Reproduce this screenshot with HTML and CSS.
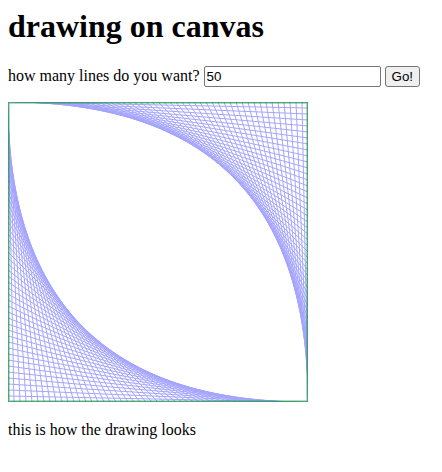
FILE: index.html
```html
<!DOCTYPE html>
<html>
<head>
<meta charset="utf-8">
<link rel="stylesheet" href="styles.css">
</head>
<body>
<h1 class="title">drawing on canvas</h1>
<p class="controls">how many lines do you want? <input class="count" type="text" value="50"> <button class="go">Go!</button></p>
<canvas id="board" class="board" width="300" height="300"></canvas>
<p class="caption">this is how the drawing looks</p>
<script src="script.js"></script>
</body>
</html>
```

FILE: styles.css
```css
body {
  margin: 8px;
  font-family: "Liberation Serif", "Times New Roman", serif;
  font-size: 16px;
  color: #000;
  background: #fff;
}
.title {
  font-size: 32px;
  font-weight: bold;
  margin: 0 0 21px 0;
}
.controls {
  margin: 0 0 15px 0;
}
.count {
  font-family: "Liberation Sans", Arial, sans-serif;
  font-size: 13.33px;
  width: 177px;
  height: 21px;
  box-sizing: border-box;
  padding: 1px 2px;
  border: 1px solid #767676;
  border-radius: 2px;
}
.go {
  font-family: "Liberation Sans", Arial, sans-serif;
  font-size: 13.33px;
  height: 21px;
  box-sizing: border-box;
  padding: 1px 6px;
  border: 1px solid #767676;
  border-radius: 3px;
  background: #efefef;
}
.board {
  vertical-align: baseline;
}
.caption {
  margin: 15px 0;
}
```

FILE: script.js
```js
const canvas = document.getElementById('board');
const ctx = canvas.getContext('2d');
const n = 50;
const size = 300;
const step = size / n;
ctx.strokeStyle = 'rgb(165,165,255)';
ctx.lineWidth = 1;
for (let i = 0; i <= n; i++) {
  ctx.beginPath();
  ctx.moveTo(i * step, 0);
  ctx.lineTo(size, i * step);
  ctx.stroke();
  ctx.beginPath();
  ctx.moveTo(0, i * step);
  ctx.lineTo(i * step, size);
  ctx.stroke();
}
ctx.globalAlpha = 0.6;
ctx.strokeStyle = 'rgb(0,140,40)';
ctx.lineWidth = 3;
ctx.strokeRect(0, 0, size, size);
```
